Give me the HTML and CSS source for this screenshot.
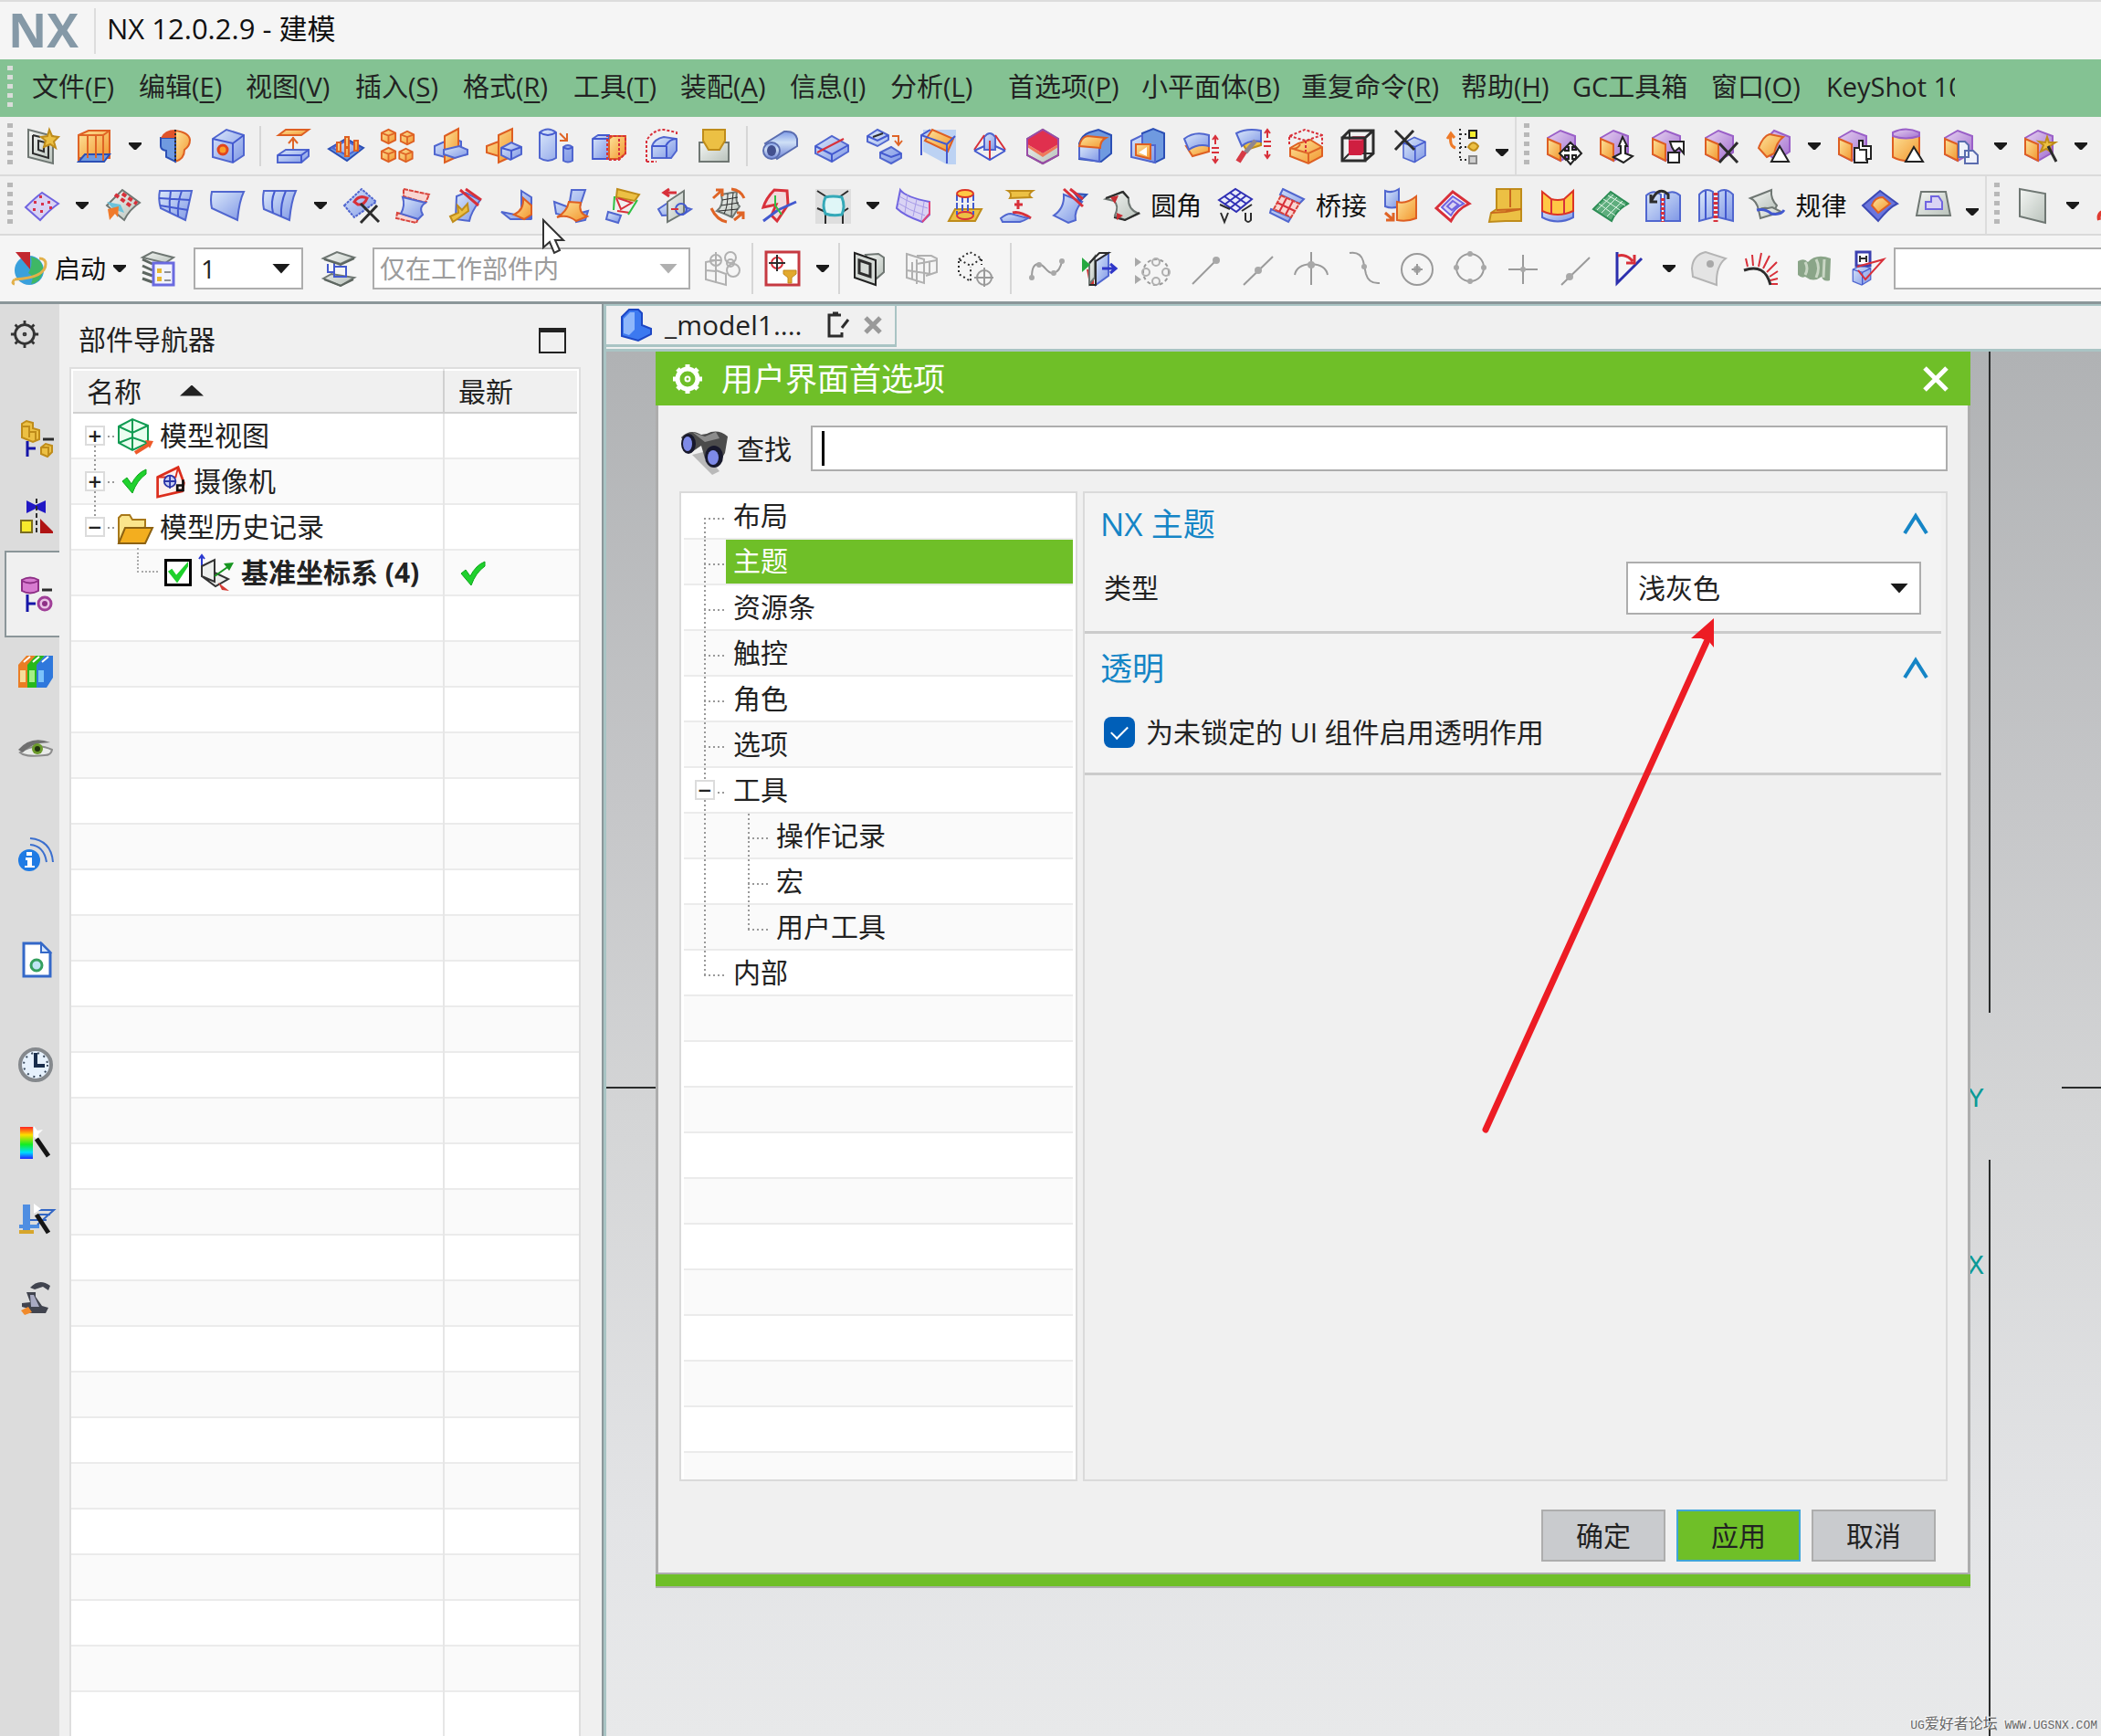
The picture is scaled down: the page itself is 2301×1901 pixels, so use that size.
FILE: index.html
```html
<!DOCTYPE html>
<html lang="zh-CN">
<head>
<meta charset="utf-8">
<title>NX 12.0.2.9 - 建模</title>
<meta name="viewport" content="width=device-width, initial-scale=1">
<link rel="stylesheet" href="styles.css">
</head>
<body>
<svg class="defs" aria-hidden="true">
  <defs>
    <linearGradient id="go" x1="0" y1="0" x2="1" y2="1"><stop offset="0" stop-color="#fde39a"/><stop offset="1" stop-color="#f2962e"/></linearGradient>
    <linearGradient id="gb" x1="0" y1="0" x2="1" y2="1"><stop offset="0" stop-color="#dbe8fa"/><stop offset="1" stop-color="#7f97e6"/></linearGradient>
    <linearGradient id="gs" x1="0" y1="0" x2="0" y2="1"><stop offset="0" stop-color="#7e9be8"/><stop offset=".4" stop-color="#cfe0f6"/><stop offset="1" stop-color="#6f84d6"/></linearGradient>
    <linearGradient id="gg" x1="0" y1="0" x2="1" y2="1"><stop offset="0" stop-color="#f4f6f4"/><stop offset="1" stop-color="#b9c2bb"/></linearGradient>
    <linearGradient id="gv" x1="0" y1="0" x2="1" y2="1"><stop offset="0" stop-color="#e6d2f0"/><stop offset="1" stop-color="#a26ed0"/></linearGradient>
    <linearGradient id="rain" x1="0" y1="0" x2="0" y2="1"><stop offset="0" stop-color="#f22"/><stop offset=".25" stop-color="#fd0"/><stop offset=".55" stop-color="#1e2"/><stop offset=".8" stop-color="#0df"/><stop offset="1" stop-color="#22f"/></linearGradient>
    <symbol id="cb" viewBox="0 0 40 40"><path class="b" d="M5 11L20 3 35 9V28L20 37 5 31Z"/><path class="bl" d="M5 11L21 16 35 9M21 16V37"/></symbol>
    <symbol id="co" viewBox="0 0 20 20"><path class="o" d="M2 6L10 2 18 6V14L10 18 2 14Z"/><path class="ol" d="M2 6L10 9 18 6M10 9V18"/></symbol>
    <symbol id="cp" viewBox="0 0 40 40"><path class="p" d="M3 11L17 3 33 9V27L17 36 3 29Z"/><path class="o" d="M3 12L17 18V36L3 29Z"/></symbol>
    <symbol id="tick" viewBox="0 0 30 30"><path fill="#1fd12d" stroke="#0ea51c" stroke-width="1" d="M2 15L7 11 12 18Q18 6 28 2V7Q18 14 13 28Z"/></symbol>
    <symbol id="down" viewBox="0 0 14 8"><path d="M0 0H14V2L8 8H6L0 2Z"/></symbol>
    <symbol id="gear" viewBox="0 0 36 36"><circle cx="18" cy="18" r="11"/><circle cx="18" cy="18" r="1"/><path d="M18 2V7M18 29V34M2 18H7M29 18H34M7 7L10 10M26 26L29 29M7 29L10 26M26 10L29 7"/></symbol>
  </defs>
</svg>

<header class="titlebar">
  <span class="logo">NX</span>
  <h1 class="app-title">NX 12.0.2.9 - 建模</h1>
</header>

<nav class="menubar">
  <span class="grip"></span>
  <button>文件(<u>F</u>)</button><button>编辑(<u>E</u>)</button><button>视图(<u>V</u>)</button><button>插入(<u>S</u>)</button><button>格式(<u>R</u>)</button><button>工具(<u>T</u>)</button><button>装配(<u>A</u>)</button><button>信息(<u>I</u>)</button><button>分析(<u>L</u>)</button><button>首选项(<u>P</u>)</button><button>小平面体(<u>B</u>)</button><button>重复命令(<u>R</u>)</button><button>帮助(<u>H</u>)</button><button>GC工具箱</button><button>窗口(<u>O</u>)</button><button>KeyShot 10</button>
</nav>

<div class="toolbar features" role="toolbar" aria-label="特征">
  <span class="grip"></span>
  <button class="tool" aria-label="草图"><svg viewBox="0 0 40 40"><path class="g" d="M5 2L32 9V39L5 32Z"/><path class="k" d="M10 8V28L27 33V17L16 14V24L22 26V20M10 8L18 10"/><path class="y" fill="#f8ea4a" d="M28 2L31 9 38 10 33 15 35 22 29 18 22 21 24 14 19 10 26 9Z"/></svg></button>
  <button class="tool" aria-label="拉伸"><svg viewBox="0 0 40 40"><path class="o" d="M3 8L14 3H37V33H3Z"/><path class="bf" d="M3 37L10 29H37L31 37Z"/><path class="ol" d="M3 8H30L37 3M3 8V36M13 9V33M22 8V33M30 8V36"/></svg></button>
  <button class="drop" aria-label="更多"><svg><use href="#down"/></svg></button>
  <button class="tool" aria-label="旋转"><svg viewBox="0 0 40 40"><path class="o" d="M20 3Q35 5 36 13 36 20 30 24 30 34 20 37Z"/><path class="bf" d="M20 11H4V20Q4 24 10 25V32L20 37Z"/><path fill="#e0542a" d="M4 11Q8 2 20 2V11Z"/><path class="k" stroke-dasharray="2 2" d="M20 2V38"/></svg></button>
  <button class="tool" aria-label="孔"><svg viewBox="0 0 40 40"><path class="b" d="M3 12L18 2 37 8V30L25 38 3 32Z"/><path class="bl" d="M3 12L25 17 37 8M25 17V38"/><circle cx="14" cy="24" r="5" fill="#fb9f2a" stroke="#e1451f" stroke-width="3"/></svg></button>
  <span class="sep"></span>
  <button class="tool" aria-label="偏置"><svg viewBox="0 0 40 40"><path class="o" d="M4 8L12 2H37L29 8Z"/><path class="ol" d="M20 10V26M15 17L20 11 25 17"/><path class="b" d="M3 30L12 24H37V31L29 38H3Z"/><path class="bl" d="M3 30H29L37 24M29 30V38"/></svg></button>
  <button class="tool" aria-label="凸起"><svg viewBox="0 0 40 40"><path class="bf" d="M1 23L20 12 39 22 21 36Z"/><path class="b" d="M5 22L20 14 35 22 21 30Z"/><path class="o" d="M10 16V26H14V16ZM19 10V21H23V10ZM29 14V25H33V14ZM19 22V31H23V22Z"/></svg></button>
  <button class="tool" aria-label="阵列特征"><svg viewBox="0 0 40 40"><use href="#co" x="0" y="0" width="19" height="19"/><use href="#co" x="20" y="2" width="20" height="18"/><use href="#co" x="0" y="20" width="19" height="19"/><use href="#co" x="19" y="21" width="19" height="18"/></svg></button>
  <button class="tool" aria-label="镜像特征"><svg viewBox="0 0 40 40"><path class="b" d="M2 20L13 15V32L2 29ZM24 12L31 15V25L24 31Z"/><path class="o" d="M13 9L28 1V31L13 38Z"/><path class="b" d="M12 24L29 20 38 24V29L24 33 12 29Z"/></svg></button>
  <button class="tool" aria-label="镜像几何体"><svg viewBox="0 0 40 40"><path class="o" d="M1 20L14 15V31L1 27ZM14 8L29 1V31L14 38Z"/><path class="b" d="M17 22L28 16 39 21V29L27 35 17 30Z"/><path class="bl" d="M17 22L28 25 39 21M28 25V35"/></svg></button>
  <button class="tool" aria-label="缩放体"><svg viewBox="0 0 40 40"><path class="b" d="M2 5Q11-2 20 5V33Q11 39 2 33ZM28 21Q33 17 38 21V36Q33 39 28 36Z"/><path class="bl" d="M2 5Q11 11 20 5M28 21Q33 25 38 21"/><path class="ol" d="M24 6L31 13M32 6V14H24"/></svg></button>
  <button class="tool" aria-label="抽取"><svg viewBox="0 0 40 40"><path class="b" d="M2 12L8 8H20V34H2Z"/><path class="o" d="M20 12L24 9H38V28L31 34H20Z"/><path class="bl" d="M2 12H20M2 34H20M8 8H20"/><path class="rd" d="M20 9H38V28L31 35H18V9M31 12V34"/></svg></button>
  <button class="tool" aria-label="包容体"><svg viewBox="0 0 40 40"><path class="b" d="M9 20Q12 12 22 10L36 12V25L30 33H9Z"/><path class="bl" d="M9 20H24Q28 12 36 12M25 20V33"/><path class="rd" d="M3 37V14Q10 2 22 2L36 5V9M3 37H14"/></svg></button>
  <button class="tool" aria-label="替换面"><svg viewBox="0 0 40 40"><path class="g" d="M4 16H36V37H4Z"/><path class="y" d="M8 2H32V14L26 24H14L8 14Z"/></svg></button>
  <span class="sep"></span>
  <button class="tool" aria-label="管道"><svg viewBox="0 0 40 40"><path class="st" d="M4 17L25 4Q37 3 39 12V20L17 34Z"/><ellipse class="st" cx="11" cy="25" rx="9" ry="9"/><ellipse cx="11" cy="25" rx="5" ry="6" fill="#43508f"/></svg></button>
  <button class="tool" aria-label="筋板"><svg viewBox="0 0 40 40"><path class="b" d="M2 20L20 9 38 19V26L20 37 2 28Z"/><path class="bl" d="M2 20L20 29 38 19M20 29V37"/><path class="r" d="M4 27L33 12"/></svg></button>
  <button class="tool" aria-label="复制特征"><svg viewBox="0 0 40 40"><path class="b" d="M1 9L12 2 24 8V13L12 20 1 15ZM15 27L27 21 38 28V33L27 39 15 33Z"/><path class="bl" d="M1 9L12 14 24 8M15 27L27 32 38 28"/><path class="k" d="M7 10L18 6"/><path class="ol" d="M28 9H35V18M31 14L35 19 39 14"/></svg></button>
  <button class="tool" aria-label="修剪体"><svg viewBox="0 0 40 40"><path fill="#bcd2f3" d="M4 2H40V40H30L4 26Z"/><path class="o" d="M6 14L14 2 37 12 31 26Z"/><path class="bl" d="M2 30V8L12 2M2 8L30 18 39 9M30 18V39"/></svg></button>
  <button class="tool" aria-label="拔模体"><svg viewBox="0 0 40 40"><path class="b" d="M14 10Q20 2 26 10V24H14Z"/><path class="r" d="M14 8L3 24M26 8L37 24M20 14V35"/><path class="bl" d="M3 25L14 20M26 20L37 25M3 25L20 35 37 25"/></svg></button>
  <button class="tool" aria-label="壳体"><svg viewBox="0 0 40 40"><path class="g" d="M3 12L20 2 37 12V30L20 39 3 30Z"/><path fill="#e0304e" d="M3 12L20 2 37 12V18L20 28 3 18Z"/><path fill="#f0785a" d="M3 18L20 28 37 18V21L20 32 3 21Z"/><path stroke="#9a4aa8" fill="none" d="M3 12L20 2 37 12V30L20 39 3 30Z"/></svg></button>
  <button class="tool" aria-label="边倒圆"><svg viewBox="0 0 40 40"><path class="bf" d="M3 17Q6 8 14 5L24 2 38 8V28L27 37 3 34Z"/><path class="b" d="M3 19H25V37L3 33Z"/><path class="o" d="M3 20Q5 10 12 9L32 11Q26 14 26 22Z"/></svg></button>
  <button class="tool" aria-label="倒角"><svg viewBox="0 0 40 40"><path class="bf" d="M14 6L26 1 38 6V33L28 38 14 34Z"/><path class="b" d="M2 14L14 8V19H28V38L2 32Z"/><path class="o" d="M7 18H23V34L7 30Z"/><path class="n" d="M10 27L19 21V31Z"/></svg></button>
  <button class="tool" aria-label="加厚"><svg viewBox="0 0 40 40"><path class="o" d="M4 20L11 31 29 26V18Z"/><path class="b" d="M2 12Q13 3 29 8V20Q17 17 7 24Z"/><path class="r" d="M32 22H40M32 27H40M36 10V18M36 31V37M33 13L36 9 39 13M33 34L36 38 39 34"/></svg></button>
  <button class="tool" aria-label="修补"><svg viewBox="0 0 40 40"><path class="y" d="M8 16L13 24 29 19V12Z"/><path class="b" d="M2 6Q13 0 29 3V15Q16 13 8 20Z"/><path d="M23 14L12 27" stroke="#8f8690" stroke-width="5"/><path d="M11 26L4 37" stroke="#d63a45" stroke-width="6"/><path class="r" d="M32 15H40M32 20H40M36 3V11M36 25V32M33 6L36 2 39 6M33 29L36 33 39 29"/></svg></button>
  <button class="tool" aria-label="偏置面"><svg viewBox="0 0 40 40"><path class="o" d="M3 22L12 17 25 13 38 21V31L23 39 3 31Z"/><path class="ol" d="M3 22Q10 25 14 18M3 22L23 28 38 21M23 28V39"/><path class="rd" d="M2 18V9L19 2 38 8V18M2 9L20 14 38 8M20 14V26"/></svg></button>
  <button class="tool" aria-label="包容块"><svg viewBox="0 0 40 40"><path class="k" d="M11 3V28H37M11 28L3 36"/><path fill="#cf1f40" d="M10 14L15 9H29V24L24 30H10Z"/><path fill="#e95a7d" d="M10 14L15 9H29L24 14Z"/><path class="k2" d="M3 11H28V36H3ZM3 11L11 3H37V28L28 36M28 11L37 3"/></svg></button>
  <button class="tool" aria-label="删除体"><svg viewBox="0 0 40 40"><use href="#cb" x="8" y="8" width="32" height="32"/><path class="k2" d="M3 3L24 24M23 3L3 24"/></svg></button>
  <button class="tool" aria-label="重排序"><svg viewBox="0 0 40 40"><path class="kd" d="M16 1V36M16 7H25M16 21H25M16 35H25"/><path fill="#f6ef2f" stroke="#222" d="M26 3H34V11H26Z"/><path class="y" d="M25 21Q30 12 36 20 32 29 25 21Z"/><path fill="#cfcfcf" stroke="#888" d="M26 31H34V39H26Z"/><path fill="none" stroke="#ee7a28" stroke-width="3" d="M11 22Q4 20 6 8M2 12L6 6 10 11"/></svg></button>
  <button class="drop low" aria-label="工具条选项"><svg><use href="#down"/></svg></button>
  <span class="grip split"></span>
  <button class="tool" aria-label="移动面"><svg viewBox="0 0 40 40"><use href="#cp"/><path class="w" d="M28 16L33 21H30V24H34V21L40 28 34 34V30H30V34H33L28 40 23 34H26V30H22V34L16 28 22 22V25H26V21H23Z"/></svg></button>
  <button class="tool" aria-label="拉出面"><svg viewBox="0 0 40 40"><use href="#cp"/><path class="w" d="M27 10L32 20H30V28L38 31 28 38 17 32 25 28V20H23Z"/></svg></button>
  <button class="tool" aria-label="调整大小"><svg viewBox="0 0 40 40"><use href="#cp"/><path class="w" d="M20 27H32V38H20ZM22 15H37V28L32 22 27 26 24 21Z"/></svg></button>
  <button class="tool" aria-label="删除面"><svg viewBox="0 0 40 40"><use href="#cp"/><path class="k2" d="M18 17L38 38M38 16L18 38"/></svg></button>
  <button class="tool" aria-label="调整圆角"><svg viewBox="0 0 40 40"><path class="p" d="M4 20L20 3 37 10V26L22 36Z"/><path class="o" d="M3 22Q8 9 15 7L30 10Q23 15 20 28L12 32Z"/><path class="w" d="M26 20L36 37H17Z"/></svg></button>
  <button class="drop" aria-label="更多"><svg><use href="#down"/></svg></button>
  <button class="tool" aria-label="复制面"><svg viewBox="0 0 40 40"><use href="#cp"/><path class="w" d="M20 22H25V14H29V20H38V34H34V38H20Z"/><path class="k" d="M25 24H33V36"/></svg></button>
  <button class="tool" aria-label="同步圆柱"><svg viewBox="0 0 40 40"><path class="o" d="M4 6V32Q19 40 33 32V6Z"/><path class="p" d="M4 5Q18-2 33 5V9Q18 14 4 9Z"/><path class="w" d="M27 21L37 37H18Z"/></svg></button>
  <button class="tool" aria-label="粘贴面"><svg viewBox="0 0 40 40"><use href="#cp"/><path class="wb" d="M18 15H25L29 19V32H18ZM25 25H34L39 30V39H25Z"/></svg></button>
  <button class="drop" aria-label="更多"><svg><use href="#down"/></svg></button>
  <button class="tool" aria-label="优化面"><svg viewBox="0 0 40 40"><use href="#cp"/><path class="y" d="M27 10L29 16 36 16 30 20 32 27 26 23 20 26 23 19 18 15 25 16Z"/><path class="k2" d="M28 20L37 37"/></svg></button>
  <button class="drop" aria-label="更多"><svg><use href="#down"/></svg></button>
</div>

<div class="toolbar surfaces" role="toolbar" aria-label="曲面">
  <span class="grip"></span>
  <button class="tool" aria-label="通过点"><svg viewBox="0 0 40 40"><path class="v" d="M2 22Q12 12 20 6L38 18Q28 25 18 36Z"/><path fill="#d8304a" d="M17 9h3v3h-3zM11 15h3v3h-3zM19 17h3v3h-3zM26 15h3v3h-3zM10 23h3v3h-3zM18 25h3v3h-3zM28 21h3v3h-3z"/></svg></button>
  <button class="drop" aria-label="更多"><svg><use href="#down"/></svg></button>
  <button class="tool" aria-label="拟合曲面"><svg viewBox="0 0 40 40"><path class="g" d="M3 20L20 3 39 17Q28 24 22 36Z"/><path class="r" stroke-width="4" stroke-dasharray="5 3" d="M12 8L31 22M20 7L36 18"/><path fill="#6cc3da" d="M3 16L18 19 22 28 10 24Z"/><path fill="#f07a2a" d="M4 24L16 21 15 33 12 29 6 36Z"/></svg></button>
  <button class="tool" aria-label="曲线网格"><svg viewBox="0 0 40 40"><path class="b" d="M3 4H38L31 36 4 23Q1 13 3 4Z"/><path class="bl" d="M15 4Q13 16 14 28M27 4Q22 18 23 32M2 12L36 14M3 20L34 25"/></svg></button>
  <button class="tool" aria-label="四点曲面"><svg viewBox="0 0 40 40"><path class="b" d="M3 5H38Q33 15 31 36L3 23Q1 14 3 5Z"/></svg></button>
  <button class="tool" aria-label="通过曲线组"><svg viewBox="0 0 40 40"><path class="b" d="M3 4H38Q33 15 31 36L3 24Q1 13 3 4Z"/><path class="bl" d="M15 4Q10 16 13 28M27 4Q21 18 22 32"/></svg></button>
  <button class="drop" aria-label="更多"><svg><use href="#down"/></svg></button>
  <button class="tool" aria-label="删除曲面"><svg viewBox="0 0 40 40"><path class="b" stroke-dasharray="3 1" d="M2 20L21 2 37 16 13 33Z"/><path class="r" stroke-width="3" d="M13 16Q18 8 27 12 24 20 17 19Z"/><path class="k2" d="M20 18L40 38M38 20L20 39"/></svg></button>
  <button class="tool" aria-label="延伸片体"><svg viewBox="0 0 40 40"><path class="rs" d="M10 2L38 8 34 17 10 10ZM3 28L26 34 24 39 2 34Z"/><path class="b" d="M9 11L34 17Q26 22 31 30L26 35 7 29Q12 20 9 11Z"/></svg></button>
  <button class="tool" aria-label="编辑曲面"><svg viewBox="0 0 40 40"><path class="b" d="M10 10L20 6 36 14Q26 27 24 37L9 35Z"/><path class="r" stroke-width="3" d="M14 3L34 20M20 2L37 14"/><path class="y" d="M3 32L12 28 11 20 16 25 22 18 23 26 12 34 6 38Z"/></svg></button>
  <button class="tool" aria-label="过渡"><svg viewBox="0 0 40 40"><path class="b" d="M24 4L35 11V34L24 28ZM2 27Q12 29 17 30L35 35H12Z"/><path class="o" d="M26 12Q27 25 16 30L27 35 35 30V20Z"/></svg></button>
  <button class="tool" aria-label="桥接曲面"><svg viewBox="0 0 40 40"><path class="b" d="M21 3L36 3 29 24 18 22ZM2 16L18 22V32L4 29ZM24 30L39 26 36 36 26 38Z"/><path class="o" d="M18 16L31 17Q28 28 38 32L26 37Q16 29 5 33 16 27 18 16Z"/></svg></button>
  <button class="tool" aria-label="艺术曲面"><svg viewBox="0 0 40 40"><path class="y" fill="#f6dc8a" d="M14 2L38 8 33 15 13 11Z"/><path class="r" d="M15 12L30 17 18 24 13 12M14 26L28 28"/><path stroke="#2fc044" fill="none" d="M11 10L10 25M36 14L26 30"/><path class="b" d="M4 27L18 31 15 39 2 35Z"/></svg></button>
  <button class="tool" aria-label="剖切曲面"><svg viewBox="0 0 40 40"><path class="b" d="M2 24L14 16 38 24 29 30 6 31Z"/><path class="g" d="M12 16L30 4V28L12 38Z"/><path class="r" stroke-width="3" d="M8 6H22M14 2L8 6 14 10"/><circle cx="27" cy="24" r="6" class="bl"/><path class="r" d="M16 24H24"/></svg></button>
  <button class="tool" aria-label="规律延伸"><svg viewBox="0 0 40 40"><path class="g" d="M13 8L30 5Q28 17 33 21L25 33Q17 29 8 26 16 20 13 8Z"/><path class="k1" d="M14 14L31 11M13 20L32 17M10 26L31 24M20 7Q20 22 16 29M26 6Q24 22 24 32"/><path class="ol" stroke-width="3" d="M24 2Q34 3 38 12M2 23Q8 36 19 38M4 12L14 3M14 10V3H7M27 36L37 28M37 35V28H30"/></svg></button>
  <button class="tool" aria-label="修剪和延伸"><svg viewBox="0 0 40 40"><path stroke="#d8303a" stroke-width="3" fill="#f3dadd" d="M2 22Q5 12 14 3L28 4 29 19 17 37 11 31 16 19Z"/><path class="bl" stroke-width="3" d="M2 37L18 25Q27 21 38 16"/><path stroke="#2fc044" fill="none" d="M15 9V20L22 30"/></svg></button>
  <button class="tool" aria-label="分型"><svg viewBox="0 0 40 40"><path fill="#dedede" d="M1 2H40V40H1Z"/><path class="k" d="M3 4L14 11M37 4L27 11M3 23L12 27V40M37 23L31 27V40"/><path fill="#dff6f7" stroke="#34a9b8" stroke-width="3" d="M12 11Q20 9 30 11 34 21 30 30 20 32 12 29 8 20 12 11Z"/></svg></button>
  <button class="drop" aria-label="更多"><svg><use href="#down"/></svg></button>
  <button class="tool" aria-label="片体加厚"><svg viewBox="0 0 40 40"><path class="v" d="M6 3Q12 11 38 16V30L30 38Q10 31 2 23Z"/><path class="vl" d="M5 10Q18 18 36 23M3 17Q15 25 33 31M14 8L11 28M24 13L20 32M32 16L29 36"/><path stroke="#e0457a" fill="none" d="M38 16V29L30 38"/></svg></button>
  <button class="tool" aria-label="投影"><svg viewBox="0 0 40 40"><path class="y" d="M9 24H38L31 37H2Z"/><ellipse class="r" cx="20" cy="31" rx="9" ry="4"/><path class="bl" stroke-dasharray="7 2" d="M11 8V30M17 10V28M23 10V28M29 8V30"/><ellipse class="or" cx="20" cy="7" rx="9" ry="4"/></svg></button>
  <button class="tool" aria-label="偏置曲面"><svg viewBox="0 0 40 40"><path class="y" d="M9 4L36 4Q30 8 34 11L11 12Q14 7 9 4Z"/><path class="r" stroke-width="3" d="M20 14V24M16 19H25M14 28Q22 26 34 34"/><path class="b" d="M1 34Q7 29 12 29L31 34Q26 37 22 38H3Z"/></svg></button>
  <button class="tool" aria-label="修剪片体"><svg viewBox="0 0 40 40"><path class="b" d="M13 8L33 16Q24 26 26 36L18 39 2 31Q14 23 13 8Z"/><path class="bf" d="M25 7L38 8 31 15Z"/><path class="r" stroke-width="3" d="M13 2L34 21M20 2L34 13"/></svg></button>
  <button class="tool labelled"><svg viewBox="0 0 40 40"><path class="g" d="M2 13L20 5 27 12Q26 24 38 29L23 36 12 31Q17 20 11 15Z"/><path class="k" d="M2 12L21 5 27 12M11 33L23 36 39 28"/><path fill="#c72c33" d="M7 11L16 9 12 18ZM14 28L21 31 14 36Z"/></svg><span>圆角</span></button>
  <button class="tool" aria-label="UV 方向"><svg viewBox="0 0 40 40"><path fill="#e9ebfa" stroke="#3030b4" d="M2 14L20 2 38 13 21 27Z"/><path stroke="#3030b4" fill="none" d="M8 10L26 23M14 6L32 18M8 19L26 6M14 23L32 9"/><path class="k" d="M14 24L3 19M38 19L27 26M4 28L8 38 12 28M31 28V36Q34 40 37 36V28"/></svg></button>
  <button class="tool labelled"><svg viewBox="0 0 40 40"><path class="b" d="M15 2L38 13 33 18 12 8ZM2 24L24 33 21 38 1 28Z"/><path class="rs" d="M13 9L33 18 24 33 5 24Z"/><path class="r" d="M19 12L11 27M26 15L18 30M9 17L28 26"/></svg><span>桥接</span></button>
  <button class="tool" aria-label="替换"><svg viewBox="0 0 40 40"><path class="b" d="M3 4Q10 7 18 2V21Q10 24 3 21Z"/><path class="o" d="M16 16Q26 19 37 10V34Q27 38 16 36Z"/><path class="ol" stroke-width="3" d="M3 28L11 35M12 28V36H4"/></svg></button>
  <button class="tool" aria-label="整体变形"><svg viewBox="0 0 40 40"><path fill="#fff" stroke="#d8303a" stroke-width="3" d="M2 23L20 5 38 18Q25 24 18 37Z"/><path class="v" d="M8 22L20 10 32 18Q22 23 18 31ZM14 21L20 15 26 19 19 25Z"/></svg></button>
  <button class="tool" aria-label="弯边"><svg viewBox="0 0 40 40"><path class="y" d="M10 2H37V37H20L2 38 4 28 10 24Z"/><path fill="none" stroke="#c9671e" d="M25 2V22M10 25L37 24M4 28L20 27 37 24"/></svg></button>
  <button class="tool" aria-label="熔合"><svg viewBox="0 0 40 40"><path class="b" d="M3 24Q20 34 37 24V33Q20 42 3 33Z"/><path class="or" d="M3 5Q8 9 13 13Q20 15 27 13L37 4V26Q20 34 3 26Z"/><path class="r" d="M13 13V29M27 13V29"/></svg></button>
  <button class="tool" aria-label="网格面"><svg viewBox="0 0 40 40"><path fill="#5fae7e" stroke="#2c8d55" d="M1 24L20 5 39 18Q26 25 21 37Z"/><path stroke="#e2f6e8" fill="none" stroke-width="1" d="M7 18L25 31M12 13L30 25M17 9L36 20M10 28L27 11M16 32L33 15M5 25L23 8"/></svg></button>
  <button class="tool" aria-label="展平"><svg viewBox="0 0 40 40"><path class="b" d="M2 9Q10 2 18 8V37H2ZM22 8Q31 2 39 9V37H22Z"/><path class="r" stroke-width="4" stroke-dasharray="3 2" d="M20 12V38"/><path class="k" stroke-width="3" d="M8 14Q16-2 26 8V13M7 8V16H14"/></svg></button>
  <button class="tool" aria-label="缝合"><svg viewBox="0 0 40 40"><path class="b" d="M2 8Q9 0 17 5V33L2 37ZM23 5Q31 0 39 8V37L23 33Z"/><path class="bl" d="M9 4V35M31 4V35"/><path class="r" stroke-width="5" stroke-dasharray="3 2" d="M20 6V38"/></svg></button>
  <button class="tool labelled"><svg viewBox="0 0 40 40"><path class="g" d="M2 12Q10 9 15 7L25 3Q24 13 31 20L28 26Q18 20 11 25 9 15 2 12Z"/><path class="g" d="M11 25L26 22 36 27 13 34Z"/><path class="bl" stroke-width="3" d="M9 25Q18 23 25 29 35 31 39 25"/></svg><span>规律</span></button>
  <button class="tool" aria-label="补片"><svg viewBox="0 0 40 40"><path fill="#6a75dd" stroke="#3c49b4" d="M1 20L20 4 39 18Q30 22 18 37Z"/><path class="o" d="M11 20Q14 11 23 11L31 18 18 28Z"/></svg></button>
  <button class="tool" aria-label="有界平面"><svg viewBox="0 0 40 40"><path class="g" d="M7 5H34L39 31H2Z"/><path class="v" d="M12 24V16H18V10H26L30 16V24Z"/></svg></button>
  <button class="drop low" aria-label="工具条选项"><svg><use href="#down"/></svg></button>
  <span class="grip split"></span>
  <button class="tool" aria-label="基准平面"><svg viewBox="0 0 40 40"><path class="g" d="M6 2L34 7V39L6 32Z"/></svg></button>
  <button class="drop" aria-label="更多"><svg><use href="#down"/></svg></button>
  <button class="peek" aria-label="曲线"><svg viewBox="0 0 40 40"><path stroke="#e03a30" stroke-width="4" fill="none" d="M4 36Q2 28 10 26L34 4"/></svg></button>
</div>

<div class="toolbar selection" role="toolbar" aria-label="选择">
  <button class="start"><svg viewBox="0 0 40 40"><circle cx="20" cy="22" r="16" fill="#3aa0dc"/><path fill="#3fb765" d="M22 7Q36 10 35 24 32 36 22 37 26 28 19 25 24 17 22 7Z"/><path fill="none" stroke="#e2b04a" stroke-width="3" d="M4 32Q38 30 38 15 38 9 31 9M4 32Q0 36 4 37"/><path fill="#c2272f" d="M5 2H21V21Z"/></svg>启动<svg class="mini"><use href="#down"/></svg></button>
  <button class="tool" aria-label="图层设置"><svg viewBox="0 0 40 40"><path class="g" d="M3 8L14 2 37 8 28 14Z"/><path class="gk" stroke-width="3" d="M3 10L14 15M3 17L14 22M3 24L14 28M3 31L14 35"/><path fill="#f2f3fd" stroke="#6a6ae0" stroke-width="3" d="M15 14H37V38H15Z"/><path fill="#e8b830" d="M19 20h5v5h-5zM19 29h5v5h-5z"/><path class="k1" d="M27 24H34M27 33H34"/></svg></button>
  <label class="pick layer"><select aria-label="工作图层"><option>1</option></select></label>
  <button class="tool" aria-label="移动至图层"><svg viewBox="0 0 40 40"><path class="g" d="M3 9L18 2 37 8 22 15ZM3 31L12 26 37 30 22 39Z"/><path class="bl" d="M8 15V24H15V29H28V18H15M15 14V24"/><path class="gk" d="M4 10L22 16 37 9M4 32L22 39 36 32"/></svg></button>
  <label class="pick scope"><select aria-label="选择范围" disabled><option>仅在工作部件内</option></select></label>
  <button class="tool" aria-label="装配约束"><svg viewBox="0 0 40 40"><path class="gl" d="M2 13L13 11V22L24 26V38L2 32ZM13 2V36M7 11H19M2 22L13 23"/><circle class="gl" cx="13" cy="11" r="6"/><circle class="gl" cx="29" cy="8" r="6"/><circle class="gl" cx="32" cy="22" r="7"/><circle class="gl" cx="29" cy="14" r="4"/></svg></button>
  <span class="sep tall"></span>
  <button class="tool" aria-label="选择优先级"><svg viewBox="0 0 40 40"><path fill="#fff" stroke="#c63a42" stroke-width="3" d="M2 2H38V38H2Z"/><circle class="r" cx="14" cy="14" r="6"/><path class="k" d="M14 5V23M5 14H23"/><path fill="#e2a92e" stroke="#c48a1c" stroke-width="1" d="M21 22H35V26L30 30V36H26V30L21 26Z"/></svg></button>
  <button class="drop" aria-label="更多"><svg><use href="#down"/></svg></button>
  <span class="sep tall"></span>
  <button class="tool" aria-label="着色边框"><svg viewBox="0 0 40 40"><path class="g" d="M16 5L30 4 36 8V24L28 31Z"/><path class="kf" d="M4 3L27 11V38L4 30Z"/><path class="k" stroke-width="3" d="M9 11L21 15V29L9 25Z"/></svg></button>
  <button class="tool" aria-label="线框"><svg viewBox="0 0 40 40"><path class="gl" d="M3 4L22 10V36L3 30ZM14 6H30L36 9V24L24 28M14 15L36 11M14 10V37M3 22L30 26M9 13V31M28 12V25"/></svg></button>
  <button class="tool" aria-label="隐藏线"><svg viewBox="0 0 40 40"><path class="kd" d="M2 10L14 2 27 9 15 17ZM2 12V26L15 34V18M27 10V16"/><circle cx="30" cy="30" r="8" class="gm"/><path class="gm" d="M30 19V40M19 30H40"/></svg></button>
  <span class="sep tall wide"></span>
  <button class="tool" aria-label="曲线"><svg viewBox="0 0 40 40"><path class="gm" d="M4 30Q4 14 12 15C20 17 20 26 28 25Q35 23 37 12"/><circle class="gd" cx="4" cy="30" r="3"/><circle class="gd" cx="12" cy="16" r="3"/><circle class="gd" cx="28" cy="25" r="3"/><circle class="gd" cx="37" cy="12" r="3"/></svg></button>
  <button class="tool" aria-label="启用捕捉点"><svg viewBox="0 0 40 40"><path fill="#d03232" d="M6 21H14V37H9Z"/><path class="g" d="M9 15L15 7V30L9 37Z"/><path class="b" stroke="#555" d="M16 12L30 3V28L16 38Z"/><path class="k" d="M9 14L20 3H30L16 12V38H9"/><path fill="#26a840" d="M1 8L10 16 1 24Z"/><path stroke="#2f36c8" fill="none" stroke-width="3" d="M23 20H37M32 15L38 20 32 25"/></svg></button>
  <button class="tool" aria-label="清除捕捉"><svg viewBox="0 0 40 40"><circle cx="24" cy="24" r="14" class="gm" stroke-dasharray="4 3"/><circle class="gl" cx="24" cy="13" r="4"/><circle class="gl" cx="24" cy="34" r="4"/><circle class="gl" cx="13" cy="24" r="4"/><circle class="gl" cx="35" cy="24" r="4"/><path class="gd" d="M1 8L8 13 1 18ZM1 27L8 32 1 37Z"/></svg></button>
  <button class="tool" aria-label="端点"><svg viewBox="0 0 40 40"><path class="gm" d="M6 37L33 10"/><circle class="gd" cx="32" cy="11" r="4"/></svg></button>
  <button class="tool" aria-label="中点"><svg viewBox="0 0 40 40"><path class="gm" d="M4 38L36 7"/><circle class="gd" cx="20" cy="22" r="4"/></svg></button>
  <button class="tool" aria-label="控制点"><svg viewBox="0 0 40 40"><path class="gm" d="M20 2V38M2 27Q4 16 20 15 36 16 38 27"/><circle class="gd" cx="20" cy="16" r="4"/></svg></button>
  <button class="tool" aria-label="极点"><svg viewBox="0 0 40 40"><path class="gm" d="M4 3Q16 1 19 12L22 26Q25 37 37 36"/><circle class="gd" cx="20" cy="18" r="3"/></svg></button>
  <button class="tool" aria-label="圆弧中心"><svg viewBox="0 0 40 40"><circle class="gm" cx="20" cy="21" r="17"/><circle class="gd" cx="20" cy="21" r="4"/><path class="gm" d="M20 15V27M14 21H26"/></svg></button>
  <button class="tool" aria-label="象限点"><svg viewBox="0 0 40 40"><circle class="gm" cx="20" cy="19" r="15"/><circle class="gd" cx="20" cy="4" r="3"/><circle class="gd" cx="20" cy="34" r="3"/><circle class="gd" cx="5" cy="19" r="3"/><circle class="gd" cx="35" cy="19" r="3"/></svg></button>
  <button class="tool" aria-label="现有点"><svg viewBox="0 0 40 40"><path class="gm" d="M20 5V37M4 21H36"/><circle class="gd" cx="20" cy="21" r="3"/></svg></button>
  <button class="tool" aria-label="点在曲线上"><svg viewBox="0 0 40 40"><path class="gm" d="M4 38L35 8"/><circle class="gd" cx="13" cy="29" r="4"/></svg></button>
  <button class="tool" aria-label="角度捕捉"><svg viewBox="0 0 40 40"><path stroke="#2b2fae" stroke-width="3" fill="none" d="M7 2V36L34 9"/><path class="r" stroke-width="3" d="M8 6Q18 4 24 12M26 5V14H17"/></svg></button>
  <button class="drop" aria-label="更多"><svg><use href="#down"/></svg></button>
  <button class="tool" aria-label="点在面上"><svg viewBox="0 0 40 40"><path fill="#e4e4e4" stroke="#b4b4b4" d="M2 20Q3 5 17 2L39 9Q28 17 29 38L3 29Z"/><circle class="gd" cx="22" cy="15" r="4"/></svg></button>
  <button class="tool" aria-label="曲率梳"><svg viewBox="0 0 40 40"><path class="k" stroke-width="3" d="M1 22Q24 14 30 38"/><path class="r" d="M5 18L3 9M11 17L10 5M17 18L20 3M22 20L29 6M26 24L37 13M29 29L38 23M30 33L38 31M31 37H38"/></svg></button>
  <button class="tool" aria-label="面分析"><svg viewBox="0 0 40 40"><path fill="#8aa588" d="M2 12Q9 8 13 13 22 3 38 9L37 33Q30 35 28 29 19 36 10 29 6 31 2 27Z"/><path stroke="#c9d6c4" stroke-width="3" fill="none" d="M10 13Q14 20 10 27M22 10Q27 19 22 30M31 10L30 30"/></svg></button>
  <button class="tool" aria-label="保持选择"><svg viewBox="0 0 40 40"><use href="#cb" x="0" y="14" width="28" height="26"/><path fill="#fff" stroke="#3b40b0" stroke-width="3" d="M8 2H23V17H8Z"/><path class="k" d="M12 6V13M19 6V13M12 9H19"/><path class="r" d="M9 18L38 10 18 32 10 22"/></svg></button>
  <input class="command" type="text" aria-label="命令查找">
  <svg class="cursor" viewBox="0 0 24 38" aria-hidden="true"><path d="M1 1V31L8 25 13 37 19 34 14 23H23Z"/></svg>
</div>

<main class="workspace">
  <nav class="rail">
    <button class="cog" aria-label="设置"><svg viewBox="0 0 36 36"><use href="#gear"/></svg></button>
    <button aria-label="装配导航器"><svg viewBox="0 0 40 40"><path class="y" d="M5 3L10 0 17 2V8L24 10V20L17 23 5 18Z"/><path class="y" d="M5 6H13V18M13 12H20V21M26 29L31 25 38 27V34L33 39 26 36ZM26 29H34V38"/><path class="k2" d="M28 20H40"/><path stroke="#1616a8" stroke-width="3" fill="none" d="M11 22V39M11 30H20"/></svg></button>
    <button aria-label="约束导航器"><svg viewBox="0 0 40 40"><path fill="#2118c4" d="M10 2L20 7 31 2V16L20 11 10 16Z"/><path class="k" stroke-dasharray="5 3" d="M21 0V40"/><path fill="#f7ea2c" stroke="#7b6d20" d="M4 24H16V37H4Z"/><path fill="#b01414" d="M25 22L39 36V38H25Z"/></svg></button>
    <button class="active" aria-label="部件导航器"><svg viewBox="0 0 40 40"><path fill="#d77bd0" stroke="#8e2f86" d="M5 4Q14-1 23 4V16Q14 21 5 16Z"/><path fill="none" stroke="#8e2f86" d="M5 5Q14 10 23 5"/><path class="k2" d="M27 15H38"/><path stroke="#1616a8" stroke-width="3" fill="none" d="M11 20V39M11 30H20"/><circle cx="30" cy="30" r="7" fill="#e9c1e5" stroke="#a03f98" stroke-width="3"/><circle cx="30" cy="30" r="3" fill="#8e2f86"/></svg></button>
    <button aria-label="重用库"><svg viewBox="0 0 40 40"><path fill="#ea7d24" d="M1 12L10 2H20L12 12V37H1Z"/><path fill="#27b81c" d="M11 12L20 2H30L22 12V37H11Z"/><path fill="#2f78dc" d="M21 12L30 2H39V26L32 37H21Z"/><path fill="#f8dd9b" d="M3 18H9V31H3Z"/><path fill="#a5ef86" d="M13 18H19V31H13Z"/><path fill="#7cc3fa" d="M23 18H29V31H23Z"/><path stroke="#fff" fill="none" d="M7 9L14 3M17 9L24 3M27 9L34 3"/></svg></button>
    <button aria-label="HD3D 工具"><svg viewBox="0 0 40 40"><path fill="#e9ebe9" stroke="#8c8c8c" d="M3 23Q20 11 38 20 37 26 30 26 14 28 6 25Z"/><path fill="#6f6f6f" d="M1 20Q15 4 36 12L24 13Q12 16 6 23Z"/><circle cx="22" cy="19" r="6" fill="#6b9a2a"/><circle cx="22" cy="19" r="3" fill="#20320e"/></svg></button>
    <button class="far" aria-label="Web 浏览器"><svg viewBox="0 0 40 40"><circle cx="13" cy="26" r="12" fill="#1f7be4"/><path fill="#fff" d="M10 17h6v4h-6zM9 23h7v9h3v2H8v-2h3v-6H9z"/><path stroke="#3b6fce" fill="none" stroke-width="2" d="M14 9Q29 10 32 28M14 2Q37 4 39 28"/></svg></button>
    <button class="far" aria-label="历史页面"><svg viewBox="0 0 40 40"><path fill="#fff" stroke="#3468c8" stroke-width="3" d="M7 2H26L36 12V38H7Z"/><path fill="#d5e5fb" stroke="#3468c8" d="M26 2V12H36Z"/><circle cx="21" cy="26" r="6" fill="#bfe6f5" stroke="#35a05f" stroke-width="3"/></svg></button>
    <button class="far" aria-label="历史记录"><svg viewBox="0 0 40 40"><circle cx="20" cy="20" r="17" fill="#e6f1fc" stroke="#85898d" stroke-width="4"/><circle cx="20" cy="20" r="13" fill="none" stroke="#3b4b5e" stroke-width="2" stroke-dasharray="2 5"/><path fill="none" stroke="#182d4b" stroke-width="4" d="M20 7V21H30"/></svg></button>
    <button aria-label="系统材料"><svg viewBox="0 0 40 40"><path fill="url(#rain)" d="M3 3H17V38H3Z"/><path fill="#fff" d="M18 2L22 7 28 6 23 11 24 17 18 14Z"/><path stroke="#151515" stroke-width="5" d="M21 16L34 35"/></svg></button>
    <button aria-label="加工向导"><svg viewBox="0 0 40 40"><path fill="#4f8ee2" d="M6 3H14V33H6ZM2 25H24V29H2Z"/><path fill="#d7a62b" d="M2 31H18V35H2Z"/><path stroke="#3266c4" fill="none" stroke-width="2" d="M23 9H40L22 25M24 14H36M14 20H32"/><path stroke="#151515" stroke-width="5" d="M21 14L34 34"/><path fill="#fff" d="M18 2L26 8 18 13Z"/></svg></button>
    <button aria-label="角色"><svg viewBox="0 0 40 40"><path fill="#41444f" d="M14 9Q24-2 36 7L34 12 28 8 19 11ZM10 14H20V19L27 29 34 31 31 37H12V32L5 30V26L14 25Z"/><path fill="#a8aac2" d="M14 17H18L24 30H15Z"/><path fill="#f08a2c" d="M4 34L12 30 16 36 8 39Z"/></svg></button>
  </nav>

  <section class="navigator">
    <header class="nav-head"><h2>部件导航器</h2><button class="maximize" aria-label="最大化"></button></header>
    <div class="grid">
      <table>
        <thead><tr><th scope="col">名称<span class="sort"></span></th><th scope="col">最新</th></tr></thead>
        <tbody>
          <tr><td><div class="cell root first"><button class="twig" aria-label="展开">+</button><svg class="ic40" viewBox="0 0 40 40"><path fill="#eafff0" stroke="#109b52" d="M2 10L17 2 34 9V28L17 36 2 28Z"/><path stroke="#109b52" fill="none" d="M2 10L17 17 34 9M17 2V36M2 28L17 22 34 28"/><path stroke="#ee5a2a" stroke-width="4" d="M20 39L36 29"/><path fill="#ee5a2a" d="M31 25L40 26 36 34Z"/></svg>模型视图</div></td><td></td></tr>
          <tr><td><div class="cell root"><button class="twig" aria-label="展开">+</button><svg class="ic30 tick"><use href="#tick"/></svg><svg class="ic36" viewBox="0 0 36 40"><path fill="#fdf1ee" stroke="#dc2d1c" stroke-width="3" d="M2 15L27 3 34 22 32 32 2 39Z"/><path stroke="#dc2d1c" fill="none" d="M2 15H24L27 3"/><circle cx="17" cy="20" r="7" fill="#c7cdf4" stroke="#2c36a8"/><path stroke="#2c36a8" d="M10 20H24M17 13V29"/><path stroke="#111" stroke-width="3" fill="none" d="M33 18V31H26V25H32"/></svg>摄像机</div></td><td></td></tr>
          <tr><td><div class="cell root last"><button class="twig" aria-label="折叠">−</button><svg class="ic40" viewBox="0 0 40 40"><path fill="#fbe58c" stroke="#a8781a" d="M2 37V10L5 7H14L17 12H31V19L24 37Z"/><path fill="#f3ae1f" stroke="#8d6212" d="M2 38L9 21H39L31 38Z"/></svg>模型历史记录</div></td><td></td></tr>
          <tr><td><div class="cell strong"><span class="leaf"></span><input class="tickbox" type="checkbox" checked aria-label="基准坐标系 (4)"><svg class="ic40" viewBox="0 0 40 40"><path stroke="#2b3ad0" fill="none" d="M4 13V2M1 5L4 1 7 5"/><path fill="#eceeec" stroke="#333" d="M4 13L18 6V30L4 24ZM18 20L33 27 19 35 4 24"/><path stroke="#16951f" d="M18 24L35 12"/><path fill="#16951f" d="M28 10L39 9 34 18Z"/><path fill="#d43b34" d="M22 31L34 40 26 39Z"/></svg>基准坐标系 (4)</div></td><td><svg class="ic30"><use href="#tick"/></svg></td></tr>
        </tbody>
      </table>
    </div>
  </section>

  <section class="viewer">
    <div class="tabs">
      <div class="tab"><svg class="ic36" viewBox="0 0 36 36"><path fill="#3c79f0" stroke="#1d47c4" d="M2 9L10 1H20L24 5V18L34 22V28L20 35 2 30Z"/><path fill="#8eb7fb" d="M4 11L11 4H16V23L10 29 4 27Z"/></svg><span>_model1....</span><svg class="ic26" viewBox="0 0 26 30"><path class="k2" d="M16 4H3V27H17V23M7 2H13"/><path class="k2" d="M24 9L17 18"/></svg><button class="tab-close" aria-label="关闭"><svg viewBox="0 0 20 20"><path d="M2 2L18 18M18 2L2 18"/></svg></button></div>
    </div>
    <div class="canvas">
      <i class="frame top"></i><i class="frame bottom"></i><i class="frame left"></i><i class="frame right"></i>
      <span class="axis y-axis">Y</span><span class="axis x-axis">X</span>

      <form class="dialog" role="dialog" aria-labelledby="dlg-title">
        <header class="dialog-title"><svg viewBox="0 0 36 36"><use href="#gear"/></svg><h2 id="dlg-title">用户界面首选项</h2><button type="button" aria-label="关闭"><svg viewBox="0 0 28 28"><path d="M2 2L26 26M26 2L2 26"/></svg></button></header>
        <div class="dialog-body">
          <div class="search">
            <svg viewBox="0 0 54 50"><path fill="#b9b9b9" d="M14 28L26 25 44 46 36 50Z"/><path fill="#4b4b4b" d="M2 9Q12-1 24 6L30 5Q42-1 53 8L50 26 42 40 28 32 24 18 12 26Z"/><path fill="#8c8c8c" d="M14 3L28 8 40 3 44 10 28 14Z"/><ellipse cx="10" cy="16" rx="8" ry="11" fill="#17182c"/><ellipse cx="9" cy="16" rx="5" ry="8" fill="#7e8ae8"/><ellipse cx="38" cy="30" rx="10" ry="12" fill="#17182c"/><ellipse cx="37" cy="31" rx="6" ry="8" fill="#7e8ae8"/></svg>
            <label for="find">查找</label>
            <div class="find-box"><input id="find" type="text"><span class="caret"></span></div>
          </div>
          <div class="panes">
            <ul class="tree">
              <li class="start-node">布局</li>
              <li class="selected"><span>主题</span></li>
              <li>资源条</li>
              <li>触控</li>
              <li>角色</li>
              <li>选项</li>
              <li class="branch"><button type="button" class="box" aria-label="折叠">−</button>工具</li>
              <li class="child">操作记录</li>
              <li class="child">宏</li>
              <li class="child end-child">用户工具</li>
              <li class="end-node">内部</li>
            </ul>
            <div class="settings">
              <section>
                <h3>NX 主题<button type="button" aria-label="收起"><svg viewBox="0 0 28 24"><path d="M2 22L14 3 26 22"/></svg></button></h3>
                <div class="field"><label for="theme">类型</label><span class="pick theme"><select id="theme"><option>浅灰色</option></select></span></div>
              </section>
              <section>
                <h3>透明<button type="button" aria-label="收起"><svg viewBox="0 0 28 24"><path d="M2 22L14 3 26 22"/></svg></button></h3>
                <label class="field check"><input type="checkbox" checked>为未锁定的 UI 组件启用透明作用</label>
              </section>
            </div>
          </div>
          <footer class="actions"><button type="button">确定</button><button type="button" class="primary">应用</button><button type="button">取消</button></footer>
        </div>
        <svg class="pointer" viewBox="0 0 264 570" aria-hidden="true"><path d="M7 560L249 26" stroke="#ed1c24" stroke-width="7" stroke-linecap="round"/><path fill="#ed1c24" d="M257 0L232 22H243L252 26 257 32Z"/></svg>
      </form>
      <p class="credit">UG<span>爱好者论坛</span> WWW.UGSNX.COM</p>
    </div>
  </section>
</main>
</body>
</html>
```
FILE: styles.css
```css
* { box-sizing: border-box; }
body {
  margin: 0;
  min-height: 100vh;
  display: flex;
  flex-direction: column;
  overflow: hidden;
  background: #f0f0f0;
  color: #222;
  font: 30px/40px "Open Sans", "Noto Sans CJK SC", sans-serif;
}
h1, h2, h3, p, ul { margin: 0; padding: 0; font: inherit; }
ul { list-style: none; }
button, input, select { font: inherit; color: inherit; padding: 0; margin: 0; border: 0; background: none; border-radius: 0; }
svg { flex: none; display: block; overflow: visible; stroke-width: 2; }
.defs { position: absolute; width: 0; height: 0; }

/* icon paints */
.o { fill: url(#go); stroke: #de5f22; }
.b { fill: url(#gb); stroke: #5066cf; }
.bf { fill: #6f9ae0; stroke: #2b4fb5; }
.st { fill: url(#gs); stroke: #5a6db0; }
.v { fill: #d9d3f4; stroke: #7064e0; }
.vl { fill: none; stroke: #a79be8; stroke-width: 1; }
.p { fill: url(#gv); stroke: #9a5fc8; }
.y { fill: #ecc044; stroke: #bf8c1a; }
.g { fill: url(#gg); stroke: #6f7773; }
.n { fill: #fff; }
.w { fill: #fff; stroke: #222; }
.wb { fill: #eef1fa; stroke: #5a6cae; }
.or { fill: #ffc845; stroke: #dc3424; }
.rs { fill: #f9d6d2; stroke: #d9443c; stroke-dasharray: 5 1; }
.kf { fill: #d5dad6; stroke: #222; }
.r, .rd { fill: none; stroke: #d8303a; }
.rd { stroke-dasharray: 3 2; }
.bl { fill: none; stroke: #4359cf; }
.ol { fill: none; stroke: #df6426; }
.k, .k1, .k2, .kd { fill: none; stroke: #2c2c2c; }
.k1 { stroke-width: 1; }
.k2 { stroke-width: 3; }
.kd { stroke-dasharray: 2 3; }
.gk { fill: none; stroke: #5d6660; }
.gl { fill: none; stroke: #b0b0b0; }
.gm { fill: none; stroke: #9a9a9a; }
.gd { fill: #a8a8a8; }

/* title and menu */
.titlebar { height: 65px; display: flex; align-items: center; background: #f5f5f5; border-top: 2px solid #dcdcdc; }
.logo { width: 94px; margin: -4px 0 0 9px; font-size: 52px; font-weight: 700; color: #8599a7; }
.app-title { height: 50px; padding: 0 0 0 12px; border-left: 2px solid #ddd; font-size: 31px; line-height: 44px; color: #111; }
.menubar {
  height: 63px;
  display: grid;
  grid-template-columns: 35px 117px 117px 120px 118px 121px 117px 120px 110px 129px 146px 175px 175px 122px 152px 126px 141px;
  align-items: center;
  background: #84c293;
  font-size: 29px;
  line-height: 44px;
}
.menubar button { justify-self: start; max-width: 100%; padding-bottom: 4px; overflow: hidden; white-space: nowrap; }
.menubar u { text-underline-offset: 5px; text-decoration-thickness: 2px; }
.grip { width: 17px; align-self: stretch; flex: none; padding: 7px 0 0 8px; }
.grip::before { content: ""; display: block; width: 6px; height: 47px; background: repeating-linear-gradient(#b8b8b8 0 5px, transparent 5px 10px); }
.menubar .grip::before { background: repeating-linear-gradient(#d9dcd9 0 5px, transparent 5px 10px); }
.grip.split { width: 24px; border-left: 2px solid #dcdcdc; }

/* toolbars */
.toolbar { position: relative; height: 65px; display: flex; align-items: center; border-bottom: 2px solid #dadada; font-size: 28px; }
.features { padding-right: 6px; }
.tool { flex: 1 1 0; display: flex; align-items: center; justify-content: center; gap: 11px; }
.tool svg, .start svg { width: 40px; height: 40px; }
.labelled { flex: 1 0 66px; white-space: nowrap; color: #111; }
.drop { flex: none; width: 31px; display: flex; justify-content: center; }
.drop svg, .start .mini { width: 14px; height: 8px; fill: #1a1a1a; }
.drop.low { width: 28px; padding-top: 15px; }
.peek { flex: none; width: 15px; height: 40px; padding-left: 9px; overflow: hidden; }
.peek svg { width: 40px; height: 40px; }
.sep { flex: none; width: 2px; height: 44px; margin: 0 6px; background: #d6d6d6; }
.selection { height: 72px; border: 0; background: #f5f5f5; }
.sep.tall { height: 56px; margin: 0 3px; }
.sep.wide { margin: 0 9px; }
.start { flex: none; width: 144px; padding-left: 12px; display: flex; align-items: center; gap: 8px; color: #111; white-space: nowrap; }
.selection .tool { flex: 0 0 58px; }
.selection .drop { width: 29px; }
.pick { flex: none; display: grid; align-items: center; border: 2px solid #adadad; background: #fff; height: 46px; }
.pick select { grid-area: 1 / 1; appearance: none; width: 100%; padding-left: 6px; opacity: 1; outline: 0; }
.pick::after { content: ""; grid-area: 1 / 1; justify-self: end; margin-right: 12px; width: 20px; height: 11px; background: #1a1a1a; clip-path: polygon(0 0, 100% 0, 50% 100%); pointer-events: none; }
.layer { width: 120px; margin: 0 10px; }
.scope { width: 348px; margin: 0 6px 0 8px; color: #9c9c9c; }
.scope::after { background: #b0b0b0; }
.command { flex: 1 1 0; min-width: 0; height: 46px; border: 2px solid #adadad; border-right: 0; background: #fff; }
.cursor { position: absolute; left: 594px; top: -18px; width: 24px; height: 38px; fill: #fff; stroke: #333; }

/* workspace */
.workspace { flex: 1; min-height: 0; display: flex; border-top: 3px solid #8b9699; }
.rail { width: 65px; flex: none; display: flex; flex-direction: column; align-items: flex-end; background: #dcdcdc; }
.rail button { width: 60px; height: 85px; flex: none; display: flex; align-items: center; justify-content: center; padding-left: 8px; }
.rail svg { width: 40px; height: 40px; }
.rail .cog { width: 65px; height: 66px; margin-bottom: 39px; padding: 0 12px 0 0; }
.rail .cog svg { width: 34px; height: 34px; fill: none; stroke: #333; }
.rail .cog use { stroke-width: 3; }
.rail .active { height: 95px; margin: -5px 0; padding-left: 6px; border: 2px solid #8b9699; border-right: 0; background: #f0f0f0; }
.rail .far { margin-top: 30px; }
.navigator { width: 596px; flex: none; display: flex; flex-direction: column; padding: 0 23px 0 11px; border-right: 2px solid #8b9699; }
.nav-head { height: 69px; flex: none; display: flex; align-items: center; justify-content: space-between; padding: 10px 16px 0 10px; }
.maximize { width: 30px; height: 28px; border: 2px solid #222; border-top-width: 5px; }
.nav-head h2 { margin-bottom: 2px; }
.grid {
  flex: 1;
  border: 2px solid #dedede;
  border-bottom: 0;
  padding: 2px;
  background:
    linear-gradient(#e6e6e6, #e6e6e6) 407px 0 / 2px 100% no-repeat,
    repeating-linear-gradient(#fff 0 48px, #ebebeb 48px 50px, #fafafa 50px 98px, #ebebeb 98px 100px) 0 49px / 100% 100% no-repeat,
    #fff;
}
table { width: 100%; border-collapse: separate; border-spacing: 0; table-layout: fixed; }
th { height: 47px; padding: 2px 0 2px 15px; text-align: left; font-weight: 400; background: #f0f0f0; border-bottom: 2px solid #d0d0d0; }
th:first-child { width: 407px; border-right: 2px solid #d0d0d0; }
.sort { display: inline-block; width: 26px; height: 12px; margin: 0 0 6px 42px; background: #222; clip-path: polygon(50% 0, 100% 100%, 0 100%); }
td { height: 50px; padding: 0; }
td:last-child { padding-left: 16px; }
.cell { height: 50px; display: flex; align-items: center; padding: 0 0 2px 13px; gap: 7px; }
.strong { font-weight: 700; }
.cell, .tree li {
  --v: repeating-linear-gradient(#999 0 2px, transparent 2px 5px);
  --h: repeating-linear-gradient(90deg, #999 0 2px, transparent 2px 5px);
}
.root { background: var(--v) 23px 0 / 2px 100% no-repeat, var(--h) 38px 24px / 10px 2px no-repeat; }
.root.first { background: var(--v) 23px 25px / 2px 100% no-repeat, var(--h) 38px 24px / 10px 2px no-repeat; }
.root.last { background: var(--v) 23px 0 / 2px 25px no-repeat, var(--h) 38px 24px / 10px 2px no-repeat; }
.ic40 { width: 40px; height: 40px; }
.ic36 { width: 36px; height: 36px; }
.ic30 { width: 30px; height: 30px; }
.ic26 { width: 26px; height: 30px; }
.tick { margin-left: 4px; }
.twig, .box { width: 22px; height: 22px; flex: none; border: 2px solid #dcdcdc; background: #fff; font-size: 26px; line-height: 16px; font-weight: 600; }
.twig { margin-right: 6px; }
.leaf { width: 23px; height: 27px; margin: -27px 0 0 57px; flex: none; border: 2px dotted #aaa; border-width: 0 0 2px 2px; }
.tickbox { appearance: none; width: 30px; height: 30px; flex: none; border: 3px solid #000; background: #fff; display: grid; }
.tickbox::before { content: ""; background: #1fd12d; clip-path: polygon(4% 45%, 22% 32%, 42% 60%, 96% 0, 96% 22%, 46% 98%); }

/* document area */
.viewer { flex: 1; min-width: 0; display: flex; flex-direction: column; border-left: 3px solid #a9c4c4; }
.tabs { height: 52px; flex: none; border-top: 2px solid #a9c4c4; border-bottom: 3px solid #a9c4c4; }
.tab { width: 318px; height: 45px; display: flex; align-items: center; padding-left: 15px; border: solid #a9c4c4; border-width: 0 2px 3px 0; }
.tab span { width: 152px; margin: 0 25px 0 13px; white-space: nowrap; }
.tab-close { margin-left: 15px; }
.tab-close svg { width: 20px; height: 20px; stroke: #999; stroke-width: 5; }
.canvas { position: relative; flex: 1; background: linear-gradient(#b0b2b4, #c5c6c8 32%, #d4d5d6 55%, #e3e4e6 85%, #e8e9ea); }
.frame { position: absolute; background: #2a2c2c; }
.frame.top, .frame.bottom { right: 121px; width: 2px; }
.frame.top { top: 0; height: 724px; }
.frame.bottom { top: 885px; bottom: 0; }
.frame.left, .frame.right { top: 805px; height: 2px; }
.frame.left { left: 0; width: 54px; }
.frame.right { right: 0; width: 43px; }
.axis { position: absolute; right: 128px; font: 30px/30px "Liberation Mono", monospace; color: #0b9a96; }
.y-axis { top: 804px; }
.x-axis { top: 987px; }

/* preferences window */
.dialog { position: absolute; left: 54px; right: 143px; top: 0; bottom: 162px; display: flex; flex-direction: column; background: #f0f0f0; border: solid #adadad; border-width: 0 3px; }
.dialog::after { content: ""; height: 13px; margin: 0 -3px; background: #6fbf28; border: solid #adadad; border-width: 2px 0; flex: none; }
.dialog-title { height: 59px; flex: none; margin: 0 -3px; display: flex; align-items: center; gap: 19px; padding: 0 24px 0 17px; background: #6fbf28; color: #fff; font-size: 35px; }
.dialog-title h2 { flex: 1; }
.dialog-title svg { fill: none; stroke: #fff; stroke-width: 5; }
.dialog-title > svg { width: 36px; height: 36px; }
.dialog-title button svg { width: 28px; height: 28px; }
.dialog-body { flex: 1; min-height: 0; display: flex; flex-direction: column; padding: 22px 22px 12px 23px; }
.search { height: 50px; flex: none; display: flex; align-items: center; }
.search svg { width: 54px; height: 50px; margin-top: 8px; }
.search label { width: 90px; padding: 2px 0 0 9px; }
.find-box { flex: 1; display: grid; align-items: center; height: 50px; border: 2px solid #adadad; background: #fff; }
.find-box input { grid-area: 1 / 1; width: 100%; height: 46px; padding: 0 12px; }
.caret { grid-area: 1 / 1; width: 3px; height: 38px; margin-left: 10px; background: #000; }
.panes { flex: 1; min-height: 0; margin-top: 22px; display: grid; grid-template-columns: 436px 1fr; gap: 6px; }
.tree { border: 2px solid #dadada; padding: 1px 3px; background: repeating-linear-gradient(#fff 0 48px, #ebebeb 48px 50px, #fafafa 50px 98px, #ebebeb 98px 100px) 3px 1px / calc(100% - 6px) 100% no-repeat, #fff; }
.tree li {
  height: 50px;
  display: flex;
  align-items: center;
  padding: 0 0 2px 54px;
  background: var(--v) 22px 0 / 2px 100% no-repeat, var(--h) 22px 26px / 22px 2px no-repeat;
}
.tree .start-node { background: var(--v) 22px 26px / 2px 100% no-repeat, var(--h) 22px 26px / 22px 2px no-repeat; }
.tree .end-node { background: var(--v) 22px 0 / 2px 26px no-repeat, var(--h) 22px 26px / 22px 2px no-repeat; }
.tree .selected { padding: 0 0 2px 46px; }
.selected span { flex: 1; height: 48px; padding-left: 8px; line-height: 46px; background: #6fbf28; color: #fff; }
.tree .branch { padding-left: 12px; }
.box { margin-right: 20px; }
.tree .child { padding-left: 101px; background: var(--v) 22px 0 / 2px 100% no-repeat, var(--v) 70px 0 / 2px 100% no-repeat, var(--h) 70px 26px / 22px 2px no-repeat; }
.tree .end-child { background: var(--v) 22px 0 / 2px 100% no-repeat, var(--v) 70px 0 / 2px 26px no-repeat, var(--h) 70px 26px / 22px 2px no-repeat; }
.settings { border: 2px solid #dadada; padding-right: 5px; }
.settings section { padding: 4px 0 19px; border-bottom: 3px solid #cbcbcb; background: #f3f3f3; }
.settings section + section { padding: 8px 0 16px; }
.settings h3 { height: 64px; display: flex; align-items: center; justify-content: space-between; padding: 0 14px 4px 17px; font-size: 35px; color: #1585c6; }
.settings h3 svg { width: 28px; height: 24px; fill: none; stroke: #1585c6; stroke-width: 4; }
.field { height: 56px; margin-top: 8px; display: flex; align-items: center; justify-content: space-between; padding: 0 22px 0 21px; }
.check { justify-content: flex-start; gap: 12px; }
.check input { appearance: none; width: 34px; height: 34px; border-radius: 8px; background: #005fb8; display: grid; place-items: center; }
.check input::before { content: ""; width: 16px; height: 8px; margin-top: -4px; border: solid #fff; border-width: 0 0 2px 2px; transform: rotate(-45deg); }
.theme { width: 323px; height: 58px; }
.theme select { padding-left: 11px; }
.actions { flex: none; display: flex; justify-content: flex-end; gap: 12px; padding: 31px 13px 0 0; }
.actions button { width: 136px; height: 57px; border: 2px solid #adadad; background: #c9cbce; }
.actions .primary { background: #6fbf28; border-color: #3fa5d8; }
.pointer { position: absolute; left: 899px; top: 292px; width: 264px; height: 570px; }
.credit { position: absolute; right: 4px; bottom: 2px; font: 13px/18px "Liberation Mono", "Noto Sans CJK SC", monospace; color: #666; text-shadow: -1px -1px #fff; }
.credit span { font-size: 16px; }
```
